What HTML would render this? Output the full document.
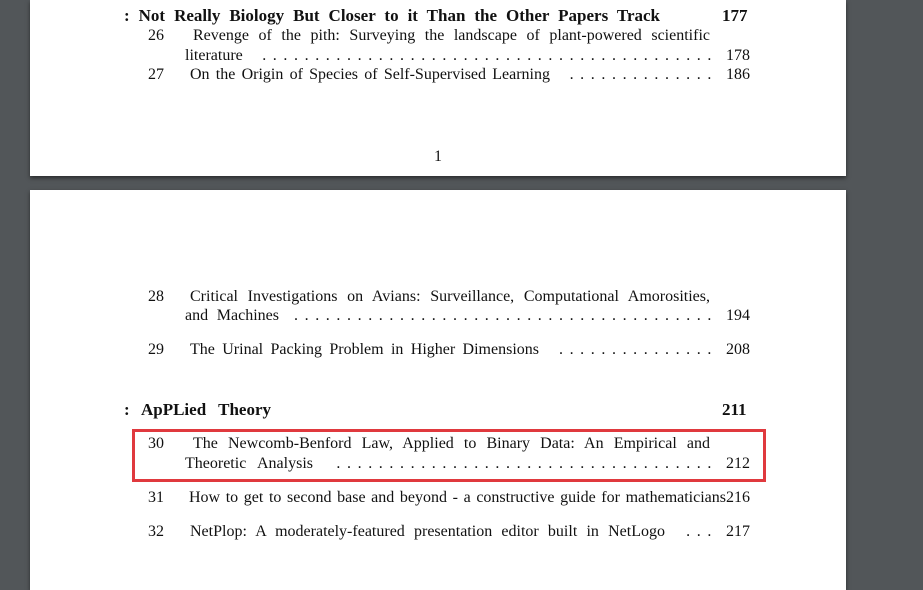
<!DOCTYPE html>
<html><head><style>
html,body{margin:0;padding:0;}
body{width:923px;height:570px;background:#525659;position:relative;overflow:hidden;font-family:"Liberation Serif",serif;font-size:16px;color:#111;}
.pg{position:absolute;left:30px;width:816px;background:#fff;box-shadow:0 2px 4px rgba(0,0,0,.5);}
.t{position:absolute;white-space:nowrap;line-height:18px;}
.j{position:absolute;white-space:nowrap;line-height:18px;text-align:justify;text-align-last:justify;overflow:visible;}
.b{font-weight:bold;font-size:17px;}
.row{position:absolute;display:flex;white-space:nowrap;line-height:18px;}
.row .s{display:inline-block;text-align-last:justify;}
.row .d{flex:1;overflow:hidden;margin:0 8px 0 10px;letter-spacing:6.6px;direction:rtl;}
.row .d.g{margin-left:16px;}
.row .n{text-align:right;}
</style></head><body>
<div class="pg" style="top:0;height:176px;">
  <div class="j b" style="left:94px;top:7px;width:536px">: Not Really Biology But Closer to it Than the Other Papers Track</div>
  <div class="t b" style="left:692px;top:7px">177</div>
  <div class="t" style="left:118px;top:27px">26</div>
  <div class="j" style="left:163px;top:27px;width:517px">Revenge of the pith: Surveying the landscape of plant-powered scientific</div>
  <div class="row" style="left:155px;top:47px;width:565px"><span class="s" style="width:63px">literature</span><span class="d">..........................................................................</span><span class="n">178</span></div>
  <div class="t" style="left:118px;top:66px">27</div>
  <div class="row" style="left:160px;top:66px;width:560px"><span class="s" style="width:360px">On the Origin of Species of Self-Supervised Learning</span><span class="d g">..........................................................</span><span class="n">186</span></div>
  <div class="t" style="left:404px;top:148px">1</div>
</div>
<div class="pg" style="top:190px;height:400px;">
  <div class="t" style="left:118px;top:98px">28</div>
  <div class="j" style="left:160px;top:98px;width:520px">Critical Investigations on Avians: Surveillance, Computational Amorosities,</div>
  <div class="row" style="left:155px;top:117px;width:565px"><span class="s" style="width:94px">and Machines</span><span class="d">..........................................................................</span><span class="n">194</span></div>
  <div class="t" style="left:118px;top:151px">29</div>
  <div class="row" style="left:160px;top:151px;width:560px"><span class="s" style="width:349px">The Urinal Packing Problem in Higher Dimensions</span><span class="d g">..........................................................</span><span class="n">208</span></div>
  <div class="j b" style="left:94px;top:211px;width:147px">: ApPLied Theory</div>
  <div class="t b" style="left:692px;top:211px">211</div>
  <div class="t" style="left:118px;top:245px">30</div>
  <div class="j" style="left:163px;top:245px;width:517px">The Newcomb-Benford Law, Applied to Binary Data: An Empirical and</div>
  <div class="row" style="left:155px;top:265px;width:565px"><span class="s" style="width:128px">Theoretic Analysis</span><span class="d g">..........................................................................</span><span class="n">212</span></div>
  <div class="t" style="left:118px;top:299px">31</div>
  <div class="j" style="left:159px;top:299px;width:561px">How to get to second base and beyond - a constructive guide for mathematicians216</div>
  <div class="t" style="left:118px;top:333px">32</div>
  <div class="row" style="left:160px;top:333px;width:560px"><span class="s" style="width:475px">NetPlop: A moderately-featured presentation editor built in NetLogo</span><span class="d g">..........................................................</span><span class="n">217</span></div>
</div>
<div style="position:absolute;left:132px;top:429px;width:628px;height:47px;border:3px solid #e0393e;"></div>
</body></html>
